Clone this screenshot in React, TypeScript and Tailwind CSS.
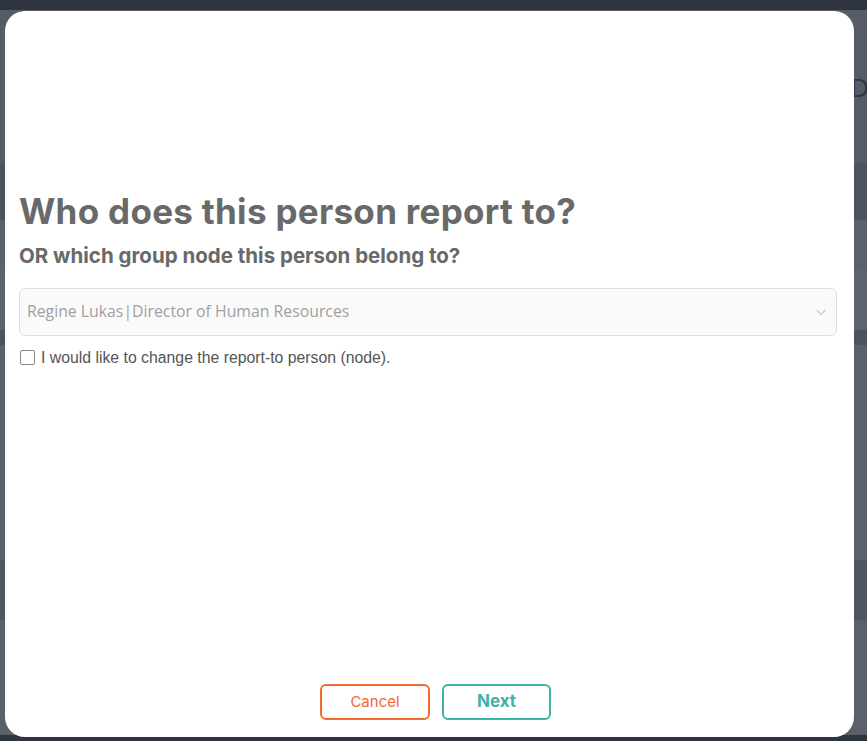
import React from 'react';

const bands = [
  { h: 'h-[10px]', c: 'bg-[#2f3540]' },
  { h: 'h-[153px]', c: 'bg-[#555c67]' },
  { h: 'h-[57px]', c: 'bg-[#4c535d]' },
  { h: 'h-[50px]', c: 'bg-[#5a616b]' },
  { h: 'h-[60px]', c: 'bg-[#5d646e]' },
  { h: 'h-[15px]', c: 'bg-[#4c535d]' },
  { h: 'h-[215px]', c: 'bg-[#5a616b]' },
  { h: 'h-[60px]', c: 'bg-[#4f565f]' },
  { h: 'h-[115px]', c: 'bg-[#5a616b]' },
  { h: 'h-[6px]', c: 'bg-[#2f3540]' },
];

export default function App() {
  return (
    <div className="relative w-[867px] h-[741px] overflow-hidden bg-[#555c67]">
      {/* backdrop page */}
      <div className="flex flex-col">
        {bands.map((b, i) => (
          <div key={i} className={`${b.h} ${b.c}`} />
        ))}
      </div>
      <div className="absolute left-[850px] top-[68px] w-[17px] overflow-hidden">
        <span className="text-[26px] text-[#2f3540]" style={{ fontFamily: '"Open Sans", sans-serif' }}>
          D
        </span>
      </div>

      {/* dialog */}
      <div className="absolute left-[5px] top-[11px] w-[849px] h-[726px] bg-white rounded-[20px] flex flex-col">
        <div className="flex-1 pl-[14px] pr-[17px] pt-[180px]">
          <h1
            className="text-[35px] leading-[40px] font-bold text-[#696969] tracking-[0.3px]"
            style={{ fontFamily: 'Inter, sans-serif' }}
          >
            Who does this person report to?
          </h1>
          <h2
            className="mt-[13px] text-[20.5px] leading-[24px] font-bold text-[#696969]"
            style={{ fontFamily: 'Inter, sans-serif' }}
          >
            OR which group node this person belong to?
          </h2>

          <div className="mt-[20px] h-[48px] rounded-[6px] border border-[#dcdcdc] bg-[#fafafa] flex items-center justify-between pl-[7px] pr-[8px]">
            <span className="text-[15.8px] text-[#a0a0a0]" style={{ fontFamily: '"Open Sans", sans-serif' }}>
              Regine Lukas|Director of Human Resources
            </span>
            <svg width="14" height="14" viewBox="0 0 24 24" fill="none" stroke="#c8c8c8" strokeWidth="2" strokeLinecap="round" strokeLinejoin="round">
              <path d="M5 9l7 7 7-7" />
            </svg>
          </div>

          <label className="mt-[10px] flex items-center gap-[6px] pl-[1px]">
            <span className="w-[15px] h-[15px] border border-[#8a8a8a] rounded-[2px] bg-white" />
            <span className="text-[15.8px] text-[#555555]" style={{ fontFamily: '"Liberation Sans", Arial, sans-serif' }}>
              I would like to change the report-to person (node).
            </span>
          </label>
        </div>

        <div className="flex justify-center gap-[12px] pb-[17px] pl-[12px]">
          <button
            className="w-[110px] h-[36px] rounded-[6px] border-2 border-[#f26a2e] text-[#f26a2e] text-[15px]"
            style={{ fontFamily: 'Inter, sans-serif' }}
          >
            Cancel
          </button>
          <button
            className="w-[109px] h-[36px] rounded-[6px] border-2 border-[#3fb2a6] text-[#3fb2a6] text-[17px] font-bold"
            style={{ fontFamily: 'Inter, sans-serif' }}
          >
            Next
          </button>
        </div>
      </div>
    </div>
  );
}
